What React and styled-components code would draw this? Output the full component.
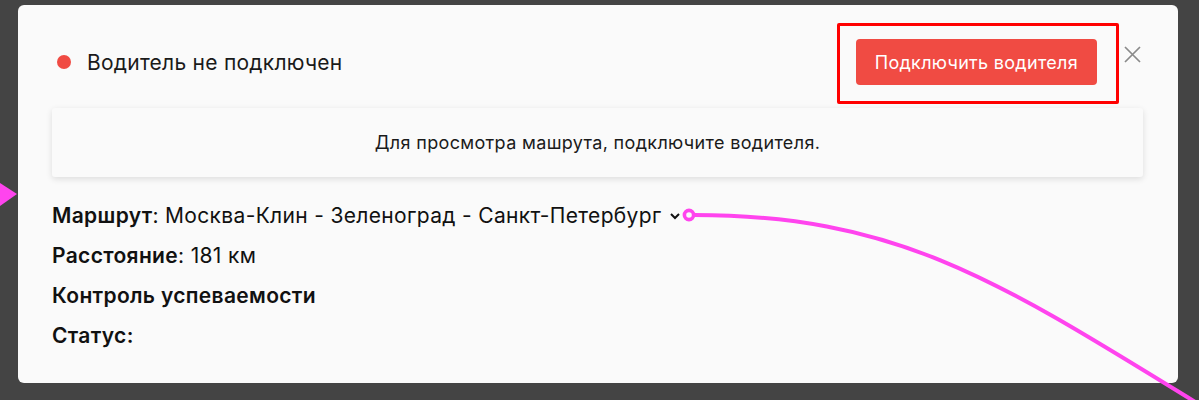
import React from "react";
import styled, { createGlobalStyle } from "styled-components";

const GlobalStyle = createGlobalStyle`
  html, body {
    margin: 0;
    padding: 0;
    background: #444444;
  }
  body {
    font-family: Inter, "Noto Sans", sans-serif;
    color: #111;
  }
`;

const Page = styled.div`
  position: relative;
  width: 1199px;
  height: 400px;
  overflow: hidden;
  padding-top: 5px;
  box-sizing: border-box;
`;

const Modal = styled.div`
  margin-left: 18px;
  width: 1160px;
  height: 378px;
  box-sizing: border-box;
  background: #fafafa;
  border-radius: 6px;
  padding: 34px 35px 28px 34px;
  display: flex;
  flex-direction: column;
`;

const Header = styled.div`
  display: flex;
  align-items: center;
  justify-content: space-between;
  height: 46px;
`;

const Status = styled.div`
  display: flex;
  align-items: center;
  gap: 16px;
  padding-left: 5px;
  font-size: 21px;
  letter-spacing: 0.25px;
  color: #1a1a1a;
`;

const Dot = styled.span`
  width: 14px;
  height: 14px;
  border-radius: 50%;
  background: ${(p) => p.color};
`;

const Actions = styled.div`
  display: flex;
  align-items: flex-start;
  height: 46px;
`;

const ConnectButton = styled.button`
  height: 46px;
  padding: 0 19px;
  border: none;
  border-radius: 4px;
  background: #f04b43;
  color: #fff;
  font-family: Inter, "Noto Sans", sans-serif;
  font-size: 18px;
  letter-spacing: 0.3px;
  cursor: pointer;
`;

const Close = styled.button`
  margin: 3px -1px 0 23px;
  width: 24px;
  height: 24px;
  padding: 0;
  border: none;
  background: none;
  display: flex;
  align-items: center;
  justify-content: center;
  cursor: pointer;
`;

const Notice = styled.div`
  margin-top: 23px;
  height: 69px;
  display: flex;
  align-items: center;
  justify-content: center;
  background: #fafafa;
  border-radius: 3px;
  box-shadow: 0 2px 6px rgba(0, 0, 0, 0.12);
  font-size: 18px;
  letter-spacing: 0.34px;
  color: #1a1a1a;
`;

const Details = styled.div`
  margin-top: 18px;
  display: flex;
  flex-direction: column;
`;

const Row = styled.div`
  display: flex;
  align-items: center;
  height: 40px;
  font-size: 21px;
  letter-spacing: 0.33px;
  color: #111;
`;

const Label = styled.span`
  font-weight: 600;
`;

const Value = styled.span`
  white-space: pre;
`;

const Chevron = styled.svg`
  margin-left: 9px;
  margin-top: 2px;
`;

const Highlight = styled.div`
  position: absolute;
  left: 837px;
  top: 23px;
  width: 282px;
  height: 81px;
  box-sizing: border-box;
  border: 3px solid #ff0000;
  border-radius: 2px;
  pointer-events: none;
`;

const Connector = styled.svg`
  position: absolute;
  left: 0;
  top: 0;
  pointer-events: none;
`;

export default function App() {
  return (
    <>
      <GlobalStyle />
      <Page>
        <Modal>
          <Header>
            <Status>
              <Dot color="#f04b43" />
              Водитель не подключен
            </Status>
            <Actions>
              <ConnectButton>Подключить водителя</ConnectButton>
              <Close aria-label="Закрыть">
                <svg width="17" height="17" viewBox="0 0 17 17">
                  <path d="M1 1 L16 16 M16 1 L1 16" stroke="#8a8a8a" strokeWidth="1.7" fill="none" />
                </svg>
              </Close>
            </Actions>
          </Header>
          <Notice>Для просмотра машрута, подключите водителя.</Notice>
          <Details>
            <Row>
              <Label>Маршрут</Label>
              <Value>: Москва-Клин - Зеленоград - Санкт-Петербург</Value>
              <Chevron width="10" height="7" viewBox="0 0 10 7">
                <path d="M1 1 L5 5 L9 1" stroke="#111" strokeWidth="2" fill="none" />
              </Chevron>
            </Row>
            <Row>
              <Label>Расстояние</Label>
              <Value>: 181 км</Value>
            </Row>
            <Row>
              <Label>Контроль успеваемости</Label>
            </Row>
            <Row>
              <Label>Статус:</Label>
            </Row>
          </Details>
        </Modal>
        <Highlight />
        <Connector width="1199" height="400" viewBox="0 0 1199 400">
          <path d="M0 183 L17 194 L0 206 Z" fill="#ff44ee" />
          <path d="M694 215 C900 215, 1000 282, 1205 408" stroke="#ff44ee" strokeWidth="4" fill="none" />
          <circle cx="689" cy="215" r="4.6" stroke="#ff44ee" strokeWidth="3.6" fill="#fafafa" />
        </Connector>
      </Page>
    </>
  );
}
